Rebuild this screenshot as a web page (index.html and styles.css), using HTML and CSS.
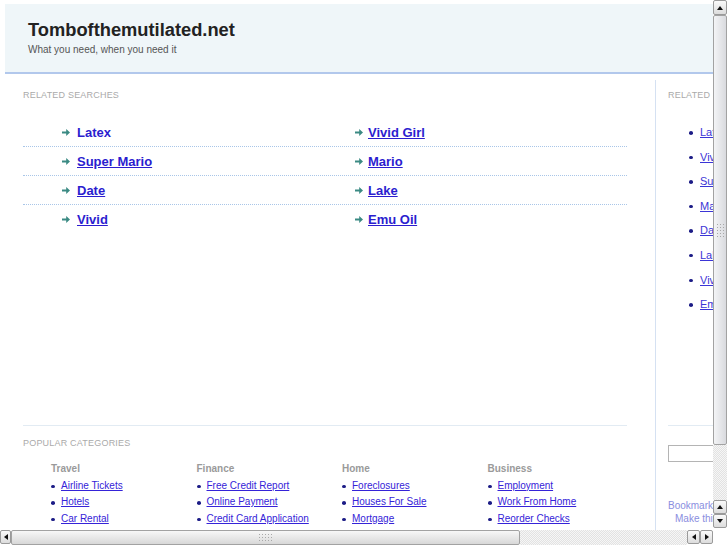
FILE: index.html
```html
<!DOCTYPE html>
<html>
<head>
<meta charset="utf-8">
<title>Tombofthemutilated.net</title>
<link rel="stylesheet" href="styles.css">
</head>
<body>
<div class="page">
  <div class="header">
    <h1 class="title">Tombofthemutilated.net</h1>
    <div class="tagline">What you need, when you need it</div>
  </div>

  <div class="main">
    <div class="left">
      <div class="related">
        <div class="label">Related Searches</div>
        <div class="rs-list">
          <div class="rs-row">
            <div class="rs-cell"><svg class="arr" viewBox="0 0 8 7"><path d="M0 2.4h4.2V0L8 3.5 4.2 7V4.6H0z"/></svg><a href="#" class="nou">Latex</a></div>
            <div class="rs-cell rs-cell2"><svg class="arr" viewBox="0 0 8 7"><path d="M0 2.4h4.2V0L8 3.5 4.2 7V4.6H0z"/></svg><a href="#">Vivid Girl</a></div>
          </div>
          <div class="rs-row">
            <div class="rs-cell"><svg class="arr" viewBox="0 0 8 7"><path d="M0 2.4h4.2V0L8 3.5 4.2 7V4.6H0z"/></svg><a href="#">Super Mario</a></div>
            <div class="rs-cell rs-cell2"><svg class="arr" viewBox="0 0 8 7"><path d="M0 2.4h4.2V0L8 3.5 4.2 7V4.6H0z"/></svg><a href="#">Mario</a></div>
          </div>
          <div class="rs-row">
            <div class="rs-cell"><svg class="arr" viewBox="0 0 8 7"><path d="M0 2.4h4.2V0L8 3.5 4.2 7V4.6H0z"/></svg><a href="#">Date</a></div>
            <div class="rs-cell rs-cell2"><svg class="arr" viewBox="0 0 8 7"><path d="M0 2.4h4.2V0L8 3.5 4.2 7V4.6H0z"/></svg><a href="#">Lake</a></div>
          </div>
          <div class="rs-row">
            <div class="rs-cell"><svg class="arr" viewBox="0 0 8 7"><path d="M0 2.4h4.2V0L8 3.5 4.2 7V4.6H0z"/></svg><a href="#">Vivid</a></div>
            <div class="rs-cell rs-cell2"><svg class="arr" viewBox="0 0 8 7"><path d="M0 2.4h4.2V0L8 3.5 4.2 7V4.6H0z"/></svg><a href="#">Emu Oil</a></div>
          </div>
        </div>
      </div>

      <div class="popular">
        <div class="label">Popular Categories</div>
        <div class="cats">
          <div class="cat">
            <div class="cat-h">Travel</div>
            <ul>
              <li><a href="#">Airline Tickets</a></li>
              <li><a href="#">Hotels</a></li>
              <li><a href="#">Car Rental</a></li>
            </ul>
          </div>
          <div class="cat">
            <div class="cat-h">Finance</div>
            <ul>
              <li><a href="#">Free Credit Report</a></li>
              <li><a href="#">Online Payment</a></li>
              <li><a href="#">Credit Card Application</a></li>
            </ul>
          </div>
          <div class="cat">
            <div class="cat-h">Home</div>
            <ul>
              <li><a href="#">Foreclosures</a></li>
              <li><a href="#">Houses For Sale</a></li>
              <li><a href="#">Mortgage</a></li>
            </ul>
          </div>
          <div class="cat">
            <div class="cat-h">Business</div>
            <ul>
              <li><a href="#">Employment</a></li>
              <li><a href="#">Work From Home</a></li>
              <li><a href="#">Reorder Checks</a></li>
            </ul>
          </div>
        </div>
      </div>
    </div>

    <div class="right">
      <div class="rc-top">
        <div class="label">Related Searches</div>
        <ul class="rc-list">
          <li><a href="#">Latex</a></li>
          <li><a href="#">Vivid Girl</a></li>
          <li><a href="#">Super Mario</a></li>
          <li><a href="#">Mario</a></li>
          <li><a href="#">Date</a></li>
          <li><a href="#">Lake</a></li>
          <li><a href="#">Vivid</a></li>
          <li><a href="#">Emu Oil</a></li>
        </ul>
      </div>
      <input class="search" type="text">
      <div class="bm bm1">Bookmark this page</div>
      <div class="bm bm2">Make this your homepage</div>
    </div>
  </div>

  <div class="vscroll">
    <div class="sbtn up"><span class="tri-up"></span></div>
    <div class="vthumb"><span class="grip vgrip"></span></div>
    <div class="track"></div>
    <div class="sbtn up"><span class="tri-up"></span></div>
    <div class="sbtn down"><span class="tri-down"></span></div>
  </div>

  <div class="hscroll">
    <div class="sbtn hb"><span class="tri-left"></span></div>
    <div class="hthumb"><span class="grip hgrip"></span></div>
    <div class="track"></div>
    <div class="sbtn hb2"><span class="tri-left"></span></div>
    <div class="sbtn hb2"><span class="tri-right"></span></div>
  </div>
  <div class="corner"></div>
</div>
</body>
</html>
```

FILE: styles.css
```css
* { box-sizing: border-box; }
html, body { margin: 0; padding: 0; background: #fff; }
body { font-family: "Liberation Sans", Arial, sans-serif; overflow: hidden; }

.page {
  position: relative;
  width: 727px;
  height: 545px;
  overflow: hidden;
}

.header {
  margin: 4px 0 0 5px;
  width: 760px;
  height: 70px;
  background: #eff6f9;
  border-bottom: 2px solid #b2c8ec;
  padding: 15px 0 0 23px;
}
.title {
  margin: 0;
  font-size: 18.3px;
  line-height: 22px;
  font-weight: bold;
  color: #222;
}
.tagline {
  margin-top: 2px;
  font-size: 10px;
  line-height: 13px;
  color: #555;
}

.main {
  display: flex;
  margin-top: 6px;
  padding-left: 23px;
  gap: 28px;
}
.left { width: 604px; flex: none; }

.label {
  font-size: 9px;
  line-height: 11px;
  text-transform: uppercase;
  letter-spacing: 0.2px;
  color: #aaa;
}

.related {
  height: 346px;
  padding-top: 10px;
  border-bottom: 1px solid #e2ebf3;
}
.rs-list { margin-top: 17px; }
.rs-row {
  display: flex;
  height: 29px;
  border-bottom: 1px dotted #a9c6e8;
}
.rs-row:last-child { border-bottom: none; }
.rs-cell {
  width: 293px;
  padding-left: 39px;
  display: flex;
  align-items: center;
}
.arr { width: 8px; height: 7px; fill: #3b8a83; margin-right: 7px; flex: none; }
.rs-cell2 .arr { margin-right: 5px; }
.rs-cell a {
  font-size: 13px;
  font-weight: bold;
  color: #2b1dcf;
}
.rs-cell a.nou { text-decoration: none; }

.popular { padding-top: 12px; }
.cats {
  display: flex;
  margin-top: 14px;
  padding-left: 28px;
}
.cat { width: 145.5px; flex: none; }
.cat-h {
  font-size: 10px;
  line-height: 12px;
  font-weight: bold;
  color: #9a9a9a;
  margin-bottom: 2.5px;
}
.cat ul { list-style: none; margin: 0; padding: 0; }
.cat li {
  position: relative;
  padding-left: 10px;
  font-size: 10px;
  line-height: 16.5px;
}
.cat li::before,
.rc-list li::before {
  content: "";
  position: absolute;
  left: 0;
  top: 7px;
  width: 4px;
  height: 3.5px;
  border-radius: 50%;
  background: #1c1c86;
}
.cat li a { color: #3523d8; }

.right {
  width: 150px;
  flex: none;
  border-left: 1px solid #d5e1f2;
  padding-left: 12px;
  min-height: 460px;
}
.rc-top {
  height: 346px;
  padding-top: 10px;
  border-bottom: 1px solid #e2ebf3;
}
.rc-list {
  list-style: none;
  margin: 19px 0 0 21px;
  padding: 0;
}
.rc-list li {
  position: relative;
  padding-left: 11px;
  font-size: 11px;
  line-height: 24.6px;
}
.rc-list li::before { top: 11px; }
.rc-list li a { color: #3b35d6; }

.search {
  display: block;
  margin-top: 19px;
  width: 100px;
  height: 17px;
  border: 1px solid #b4b4b4;
  background: #fff;
  padding: 0;
}
.bm {
  font-size: 10px;
  line-height: 13px;
  color: #8a8ee0;
  white-space: nowrap;
}
.bm1 { margin-top: 37px; }
.bm2 { padding-left: 7px; }

/* fake scrollbars, overlaid on the page */
.vscroll {
  position: absolute;
  top: 0;
  right: 0;
  width: 14px;
  height: 528px;
  display: flex;
  flex-direction: column;
  background: #fff;
}
.hscroll {
  position: absolute;
  left: 0;
  top: 530px;
  width: 713px;
  height: 15px;
  display: flex;
  background: #fff;
}
.corner {
  position: absolute;
  right: 0;
  top: 528px;
  width: 14px;
  height: 17px;
  background: #fff;
}
.track {
  flex: 1;
  background: repeating-conic-gradient(#e2e2e2 0 25%, #f6f6f6 0 50%) 0 0 / 2px 2px;
}
.sbtn {
  flex: none;
  display: flex;
  align-items: center;
  justify-content: center;
  border: 1px solid #9a9a9a;
  border-radius: 2px;
  background: linear-gradient(#fafafa, #dcdcdc);
}
.vscroll .sbtn { width: 14px; height: 14px; }
.vscroll .sbtn:first-child { height: 15px; }
.hscroll .sbtn { height: 14px; }
.hb { width: 11px; }
.hb2 { width: 13px; }

.tri-up, .tri-down, .tri-left, .tri-right { width: 0; height: 0; display: block; }
.tri-up { border-left: 3.5px solid transparent; border-right: 3.5px solid transparent; border-bottom: 4px solid #111; }
.tri-down { border-left: 3.5px solid transparent; border-right: 3.5px solid transparent; border-top: 4px solid #111; }
.tri-left { border-top: 3.5px solid transparent; border-bottom: 3.5px solid transparent; border-right: 4px solid #111; }
.tri-right { border-top: 3.5px solid transparent; border-bottom: 3.5px solid transparent; border-left: 4px solid #111; }

.vthumb {
  flex: none;
  height: 430px;
  border: 1px solid #a2a2a2;
  border-radius: 2px;
  background: linear-gradient(to right, #f3f4f6, #d9dade);
  display: flex;
  align-items: center;
  justify-content: center;
}
.hthumb {
  flex: none;
  width: 509px;
  border: 1px solid #a2a2a2;
  border-radius: 2px;
  background: linear-gradient(#f7f7f7, #d8d8d8);
  display: flex;
  align-items: center;
  justify-content: center;
}
.grip {
  display: block;
  background-image: radial-gradient(circle, #a8a8a8 0.7px, transparent 0.9px);
  background-size: 3px 3px;
}
.vgrip { width: 9px; height: 15px; }
.hgrip { width: 15px; height: 9px; }
```
